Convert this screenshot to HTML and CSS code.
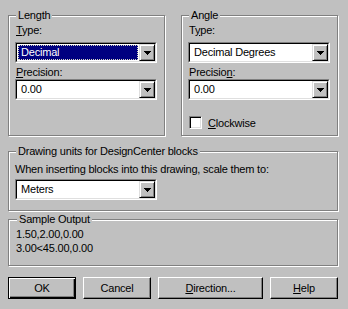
FILE: index.html
```html
<!DOCTYPE html>
<html lang="en">
<head>
    <meta charset="UTF-8">
    <title>Drawing Units</title>
    <link rel="stylesheet" href="styles.css">
</head>
<body>
    <div class="dialog">
        <div class="top-row">
            <fieldset class="group unit-box">
                <legend>Length</legend>
                <div class="field-label"><u>T</u>ype:</div>
                <div class="combo">
                    <div class="combo-inner">
                        <div class="combo-text"><span class="selected">Decimal</span></div>
                        <div class="drop"><svg width="7" height="4" viewBox="0 0 7 4"><path d="M0 0h7v1H0zM1 1h5v1H1zM2 2h3v1H2zM3 3h1v1H3z"/></svg></div>
                    </div>
                </div>
                <div class="field-label second"><u>P</u>recision:</div>
                <div class="combo tight">
                    <div class="combo-inner">
                        <div class="combo-text"><span>0.00</span></div>
                        <div class="drop"><svg width="7" height="4" viewBox="0 0 7 4"><path d="M0 0h7v1H0zM1 1h5v1H1zM2 2h3v1H2zM3 3h1v1H3z"/></svg></div>
                    </div>
                </div>
            </fieldset>

            <fieldset class="group unit-box">
                <legend>Angle</legend>
                <div class="field-label">T<u>y</u>pe:</div>
                <div class="combo">
                    <div class="combo-inner">
                        <div class="combo-text"><span>Decimal Degrees</span></div>
                        <div class="drop"><svg width="7" height="4" viewBox="0 0 7 4"><path d="M0 0h7v1H0zM1 1h5v1H1zM2 2h3v1H2zM3 3h1v1H3z"/></svg></div>
                    </div>
                </div>
                <div class="field-label second">Precisio<u>n</u>:</div>
                <div class="combo tight">
                    <div class="combo-inner">
                        <div class="combo-text"><span>0.00</span></div>
                        <div class="drop"><svg width="7" height="4" viewBox="0 0 7 4"><path d="M0 0h7v1H0zM1 1h5v1H1zM2 2h3v1H2zM3 3h1v1H3z"/></svg></div>
                    </div>
                </div>
                <div class="check-row">
                    <span class="checkbox"></span>
                    <span><u>C</u>lockwise</span>
                </div>
            </fieldset>
        </div>

        <fieldset class="group blocks-box">
            <legend>Drawing units for DesignCenter blocks</legend>
            <div class="plain-label">When inserting blocks into this drawing, scale them to:</div>
            <div class="combo">
                <div class="combo-inner">
                    <div class="combo-text"><span>Meters</span></div>
                    <div class="drop"><svg width="7" height="4" viewBox="0 0 7 4"><path d="M0 0h7v1H0zM1 1h5v1H1zM2 2h3v1H2zM3 3h1v1H3z"/></svg></div>
                </div>
            </div>
        </fieldset>

        <fieldset class="group sample-box">
            <legend>Sample Output</legend>
            <div class="sample-line">1.50,2.00,0.00</div>
            <div class="sample-line">3.00&lt;45.00,0.00</div>
        </fieldset>

        <div class="button-row">
            <div class="btn default">OK</div>
            <div class="btn">Cancel</div>
            <div class="btn wide"><u>D</u>irection...</div>
            <div class="btn"><u>H</u>elp</div>
        </div>
    </div>
</body>
</html>
```

FILE: styles.css
```css
body {
    margin: 0;
    background: #c0c0c0;
    font-family: "Liberation Sans", Arial, sans-serif;
    font-size: 11px;
    letter-spacing: -0.2px;
    color: #000;
}
.dialog {
    width: 348px;
    height: 309px;
    box-sizing: border-box;
    padding: 9px 10px 0 8px;
}
.top-row {
    display: flex;
    gap: 16px;
}
.group {
    margin: 0;
    padding: 0 6px;
    min-width: 0;
    box-sizing: border-box;
    border: 1px solid #808080;
    box-shadow: inset 1px 1px #fff, 1px 1px #fff;
}
.group legend {
    padding: 0 2px;
    margin-left: 1px;
    line-height: 13px;
    background: #c0c0c0;
}
.unit-box {
    width: 157px;
    height: 127px;
}
.field-label {
    line-height: 13px;
    padding-left: 1px;
    margin-top: 2px;
}
.field-label.second {
    margin-top: 3px;
}
.combo {
    width: 142px;
    height: 21px;
    box-sizing: border-box;
    margin-top: 5px;
    border: 1px solid;
    border-color: #808080 #fff #fff #808080;
    background: #fff;
}
.combo.tight {
    margin-top: 0;
}
.combo-inner {
    display: flex;
    height: 100%;
    box-sizing: border-box;
    border: 1px solid;
    border-color: #000 #dfdfdf #dfdfdf #000;
}
.combo-text {
    flex: 1;
    display: flex;
    padding: 1px;
}
.combo-text span {
    flex: 1;
    line-height: 13px;
    padding-left: 2px;
    border: 1px solid transparent;
}
.combo-text .selected {
    background: #000080;
    color: #fff;
    border: 1px dotted #d8d8c0;
}
.drop {
    width: 16px;
    height: 17px;
    box-sizing: border-box;
    display: flex;
    align-items: center;
    justify-content: center;
    background: #c0c0c0;
    border: 1px solid;
    border-color: #dfdfdf #000 #000 #dfdfdf;
    box-shadow: inset 1px 1px #fff, inset -1px -1px #808080;
}
.drop svg {
    display: block;
    shape-rendering: crispEdges;
}
.check-row {
    display: flex;
    align-items: center;
    gap: 6px;
    margin-top: 16px;
    padding-left: 1px;
}
.checkbox {
    width: 13px;
    height: 13px;
    box-sizing: border-box;
    background: #fff;
    border: 1px solid;
    border-color: #808080 #fff #fff #808080;
    box-shadow: inset 1px 1px #000, inset -1px -1px #dfdfdf;
}
.blocks-box {
    height: 66px;
    margin-top: 9px;
}
.plain-label {
    line-height: 13px;
    margin-top: 5px;
}
.blocks-box .combo {
    margin-top: 3px;
}
.sample-box {
    height: 53px;
    margin-top: 2px;
    padding-left: 7px;
}
.sample-line {
    line-height: 14px;
}
.sample-line:first-of-type {
    margin-top: 1px;
}
.button-row {
    display: flex;
    gap: 7px;
    margin-top: 11px;
}
.btn {
    width: 68px;
    height: 22px;
    box-sizing: border-box;
    display: flex;
    align-items: center;
    justify-content: center;
    border: 1px solid;
    border-color: #fff #000 #000 #fff;
    box-shadow: inset -1px -1px #808080;
}
.btn.wide {
    width: 105px;
}
.btn.default {
    border-color: #000;
    box-shadow: inset 1px 1px #fff, inset -1px -1px #000, inset -2px -2px #808080;
}
```
